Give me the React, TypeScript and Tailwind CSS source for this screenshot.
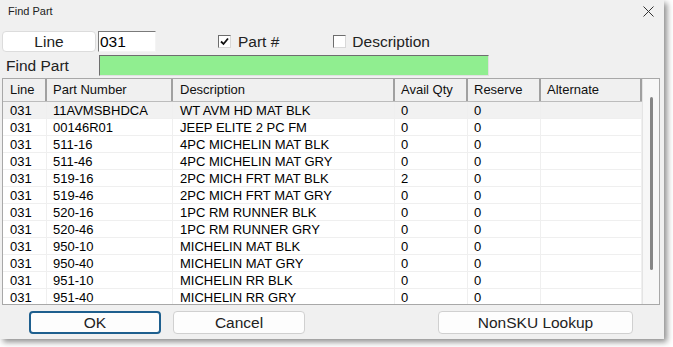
import React from 'react';

const rows = [
  ['031', '11AVMSBHDCA', 'WT AVM HD MAT BLK', '0', '0'],
  ['031', '00146R01', 'JEEP ELITE 2 PC FM', '0', '0'],
  ['031', '511-16', '4PC MICHELIN MAT BLK', '0', '0'],
  ['031', '511-46', '4PC MICHELIN MAT GRY', '0', '0'],
  ['031', '519-16', '2PC MICH FRT MAT BLK', '2', '0'],
  ['031', '519-46', '2PC MICH FRT MAT GRY', '0', '0'],
  ['031', '520-16', '1PC RM RUNNER BLK', '0', '0'],
  ['031', '520-46', '1PC RM RUNNER GRY', '0', '0'],
  ['031', '950-10', 'MICHELIN MAT BLK', '0', '0'],
  ['031', '950-40', 'MICHELIN MAT GRY', '0', '0'],
  ['031', '951-10', 'MICHELIN RR BLK', '0', '0'],
  ['031', '951-40', 'MICHELIN RR GRY', '0', '0'],
];

const cols = [
  { title: 'Line', w: 'w-[44px]', pad: 'pl-[7px]' },
  { title: 'Part Number', w: 'w-[126px]', pad: 'pl-[6px]' },
  { title: 'Description', w: 'w-[222px]', pad: 'pl-[7px]' },
  { title: 'Avail Qty', w: 'w-[73px]', pad: 'pl-[6px]' },
  { title: 'Reserve', w: 'w-[73px]', pad: 'pl-[6px]' },
  { title: 'Alternate', w: 'w-[101px]', pad: 'pl-[6px]' },
];

function Check({ checked }: { checked: boolean }) {
  return (
    <span className="w-[13px] h-[13px] border border-t-[#6d6d6d] border-l-[#6d6d6d] border-r-[#d8d8d8] border-b-[#d8d8d8] bg-white flex items-center justify-center">
      {checked && (
        <svg width="9" height="9" viewBox="0 0 9 9">
          <path d="M1 4.5 L3.5 7 L8 1.5" fill="none" stroke="#111" strokeWidth="1.8" />
        </svg>
      )}
    </span>
  );
}

export default function App() {
  return (
    <div className="w-[673px] h-[347px] bg-white font-['Liberation_Sans',Arial,sans-serif] text-black overflow-hidden">
      <div className="w-[664px] h-[339px] bg-[#f0f0f0] shadow-[3px_3px_6px_rgba(0,0,0,0.45)] flex flex-col">
        {/* title bar */}
        <div className="h-[23px] flex items-center justify-between pl-[8px] pr-[10px]">
          <span className="text-[11px] text-[#222]">Find Part</span>
          <svg width="11" height="11" viewBox="0 0 11 11">
            <path d="M0.5 0.5 L10.5 10.5 M10.5 0.5 L0.5 10.5" stroke="#333" strokeWidth="1" />
          </svg>
        </div>

        {/* line row */}
        <div className="mt-[8px] h-[21px] flex items-center">
          <button className="ml-[2px] w-[94px] h-[21px] bg-white border border-[#dcdcdc] rounded-[4px] text-[15.5px] text-[#222] leading-none">
            Line
          </button>
          <div className="ml-[2px] w-[58px] h-[21px] bg-white border border-t-[#7a7a7a] border-l-[#7a7a7a] border-r-[#f4f4f4] border-b-[#f4f4f4] text-[15.5px] leading-[19px] pl-[1px]">
            031
          </div>
          <label className="ml-[62px] flex items-center gap-[7px] text-[15.5px] text-[#222]">
            <Check checked />
            Part #
          </label>
          <label className="ml-[54px] flex items-center gap-[6px] text-[15.5px] text-[#222]">
            <Check checked={false} />
            Description
          </label>
        </div>

        {/* find part row */}
        <div className="mt-[3px] h-[21px] flex items-center">
          <span className="w-[99px] pl-[6px] text-[15.5px] text-[#222]">Find Part</span>
          <div className="w-[390px] h-[21px] bg-[#90ee90] border border-t-[#6e6e6e] border-l-[#6e6e6e] border-r-[#e0e0e0] border-b-[#e0e0e0]" />
        </div>

        {/* list */}
        <div className="mt-[2px] ml-[2px] w-[658px] h-[227px] bg-white border border-[#a8a8a8] flex overflow-hidden">
          <div className="flex flex-col w-[639px]">
            <div className="h-[23px] shrink-0 flex bg-[#f0f0f0] border-b border-[#bcbcbc]">
              {cols.map((c) => (
                <div
                  key={c.title}
                  className={`${c.w} ${c.pad} h-full flex items-center border-r-2 border-[#a0a0a0] text-[13px] text-[#111]`}
                >
                  {c.title}
                </div>
              ))}
            </div>
            {rows.map((r, i) => (
              <div
                key={i}
                className={`h-[17px] shrink-0 flex border-b border-[#efefef] ${i === 0 ? 'bg-[#f1f1f1]' : 'bg-white'}`}
              >
                {cols.map((c, j) => (
                  <div
                    key={c.title}
                    className={`${c.w} ${c.pad} h-full flex items-center border-r border-[#efefef] text-[13px] leading-none whitespace-nowrap`}
                  >
                    {r[j] ?? ''}
                  </div>
                ))}
              </div>
            ))}
          </div>
          <div className="flex-1 bg-[#f7f7f7] border-l border-[#e4e4e4] flex justify-center pt-[18px]">
            <div className="w-[3px] h-[173px] bg-[#858585] rounded-full" />
          </div>
        </div>

        {/* buttons */}
        <div className="mt-[6px] h-[23px] flex items-center">
          <button className="ml-[29px] w-[132px] h-[23px] bg-[#fdfdfd] border-2 border-[#1e5f8e] rounded-[4px] text-[15.5px] text-[#222] leading-none">
            OK
          </button>
          <button className="ml-[12px] w-[132px] h-[23px] bg-[#fdfdfd] border border-[#d0d0d0] rounded-[4px] text-[15.5px] text-[#222] leading-none">
            Cancel
          </button>
          <button className="ml-[133px] w-[195px] h-[23px] bg-[#fdfdfd] border border-[#d0d0d0] rounded-[4px] text-[15.5px] text-[#222] leading-none">
            NonSKU Lookup
          </button>
        </div>
      </div>
    </div>
  );
}
